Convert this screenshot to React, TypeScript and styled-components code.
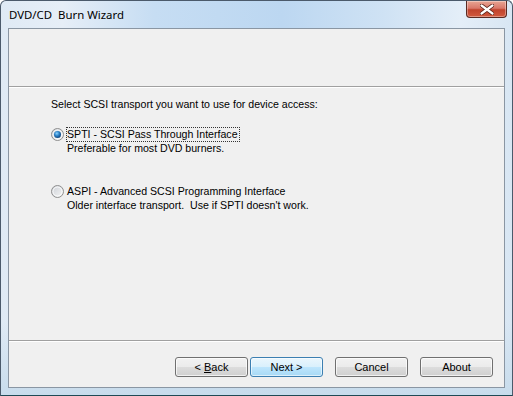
import styled, { createGlobalStyle } from "styled-components";

const GlobalStyle = createGlobalStyle`
  html, body {
    margin: 0;
    padding: 0;
    background: #ffffff;
  }
`;

const Window = styled.div`
  width: 513px;
  height: 396px;
  box-sizing: border-box;
  display: flex;
  flex-direction: column;
  border: 1px solid #4b5a6b;
  border-bottom-color: #1f4a55;
  border-radius: 6px 6px 0 0;
  overflow: hidden;
  background: linear-gradient(
    90deg,
    #dfeaf5 0%,
    #e6eef7 12%,
    #c6ddf3 30%,
    #bcd7f1 55%,
    #cfe2f4 75%,
    #e4eef8 90%,
    #d8e6f3 100%
  );
`;

const TitleBar = styled.div`
  height: 27px;
  flex: none;
  display: flex;
  align-items: flex-start;
  justify-content: space-between;
  padding-left: 8px;
`;

const Title = styled.span`
  font-family: "Noto Sans", "Open Sans", sans-serif;
  font-size: 11.4px;
  color: #000;
  line-height: 14px;
  margin-top: 7px;
  white-space: pre;
`;

const CloseButton = styled.div`
  width: 41px;
  height: 17px;
  margin-right: 5px;
  box-sizing: border-box;
  border: 1px solid #5a2a22;
  border-top: none;
  border-radius: 0 0 4px 4px;
  background: linear-gradient(
    180deg,
    #e8a593 0%,
    #d9786a 45%,
    #c0432d 55%,
    #d25a3e 100%
  );
  box-shadow: inset 0 0 0 1px rgba(255, 255, 255, 0.35);
  display: flex;
  align-items: center;
  justify-content: center;
`;

const Frame = styled.div`
  flex: 1;
  display: flex;
  padding: 0 7px 7px 7px;
  background: linear-gradient(180deg, transparent 0%, transparent 80%, #c8dcec 100%);
`;

const Client = styled.div`
  flex: 1;
  display: flex;
  flex-direction: column;
  background: #f0f0f0;
  border: 1px solid #8a96a3;
`;

const Header = styled.div`
  height: 57px;
  flex: none;
`;

const Separator = styled.div`
  height: 1px;
  flex: none;
  background: #a0a0a0;
  border-bottom: 1px solid #ffffff;
`;

const Content = styled.div`
  flex: 1;
  display: flex;
  flex-direction: column;
  padding: 10px 0 0 42px;
  font-family: "Liberation Sans", Arial, sans-serif;
  font-size: 10.6px;
  color: #000;
`;

const Prompt = styled.div`
  line-height: 13px;
  margin-bottom: 17px;
`;

const Option = styled.div<{ $gap?: number }>`
  display: grid;
  grid-template-columns: 16px auto;
  align-items: center;
  margin-bottom: ${(p) => p.$gap ?? 0}px;
`;

const Label = styled.span<{ $focused?: boolean }>`
  justify-self: start;
  line-height: 11px;
  padding: 1px 1px 1px 0;
  outline: ${(p) => (p.$focused ? "1px dotted #333" : "none")};
  outline-offset: 0;
`;

const Note = styled.span`
  grid-column: 2;
  line-height: 13px;
  margin-top: 1px;
`;

const Footer = styled.div`
  height: 45px;
  flex: none;
  display: flex;
  align-items: flex-start;
  padding: 15px 11px 0 0;
  box-sizing: border-box;
  justify-content: flex-end;
`;

const Button = styled.button<{ $default?: boolean; $gap?: number }>`
  width: 73px;
  height: 20px;
  margin-left: ${(p) => p.$gap ?? 0}px;
  padding: 0;
  box-sizing: border-box;
  border-radius: 3px;
  font-family: "Liberation Sans", Arial, sans-serif;
  font-size: 11px;
  color: #000;
  border: 1px solid ${(p) => (p.$default ? "#3c7fb1" : "#707070")};
  background: ${(p) =>
    p.$default
      ? "linear-gradient(180deg, #eaf6fd 0%, #d9f0fc 50%, #bee6fd 50%, #a7d9f5 100%)"
      : "linear-gradient(180deg, #f2f2f2 0%, #ebebeb 50%, #dddddd 50%, #cfcfcf 100%)"};
  box-shadow: inset 0 0 0 1px
    ${(p) => (p.$default ? "rgba(255,255,255,0.6)" : "rgba(255,255,255,0.7)")};
`;

const Radio = ({ checked }: { checked?: boolean }) => (
  <svg width="13" height="13" viewBox="0 0 13 13">
    <defs>
      <linearGradient id="rbg" x1="0" y1="0" x2="1" y2="1">
        <stop offset="0" stopColor="#cbcfd5" />
        <stop offset="1" stopColor="#f7f7f7" />
      </linearGradient>
      <radialGradient id="rdot" cx="0.4" cy="0.35" r="0.7">
        <stop offset="0" stopColor="#8ad3ff" />
        <stop offset="0.5" stopColor="#2a7fc5" />
        <stop offset="1" stopColor="#0f3f75" />
      </radialGradient>
    </defs>
    <circle cx="6.5" cy="6.5" r="6" fill="url(#rbg)" stroke="#8f8f8f" strokeWidth="1" />
    <circle cx="6.5" cy="6.5" r="4.5" fill="none" stroke="#ffffff" strokeOpacity="0.8" />
    {checked && <circle cx="6.5" cy="6.5" r="3.5" fill="url(#rdot)" />}
  </svg>
);

const CloseGlyph = () => (
  <svg width="14" height="11" viewBox="0 0 14 11">
    <path
      d="M1.5 1.5 L12.5 9.5 M12.5 1.5 L1.5 9.5"
      stroke="#5a2218"
      strokeWidth="4"
      strokeLinecap="round"
    />
    <path
      d="M1.5 1.5 L12.5 9.5 M12.5 1.5 L1.5 9.5"
      stroke="#ffffff"
      strokeWidth="2.2"
      strokeLinecap="round"
    />
  </svg>
);

const App = () => (
  <>
    <GlobalStyle />
    <Window>
      <TitleBar>
        <Title>{"DVD/CD  Burn Wizard"}</Title>
        <CloseButton>
          <CloseGlyph />
        </CloseButton>
      </TitleBar>
      <Frame>
        <Client>
          <Header />
          <Separator />
          <Content>
            <Prompt>Select SCSI transport you want to use for device access:</Prompt>
            <Option $gap={30}>
              <Radio checked />
              <Label $focused>SPTI - SCSI Pass Through Interface</Label>
              <Note>Preferable for most DVD burners.</Note>
            </Option>
            <Option>
              <Radio />
              <Label>ASPI - Advanced SCSI Programming Interface</Label>
              <Note>Older interface transport.&nbsp; Use if SPTI doesn't work.</Note>
            </Option>
          </Content>
          <Separator />
          <Footer>
            <Button>
              &lt; <u>B</u>ack
            </Button>
            <Button $default $gap={2}>
              Next &gt;
            </Button>
            <Button $gap={12}>Cancel</Button>
            <Button $gap={12}>About</Button>
          </Footer>
        </Client>
      </Frame>
    </Window>
  </>
);

export default App;
